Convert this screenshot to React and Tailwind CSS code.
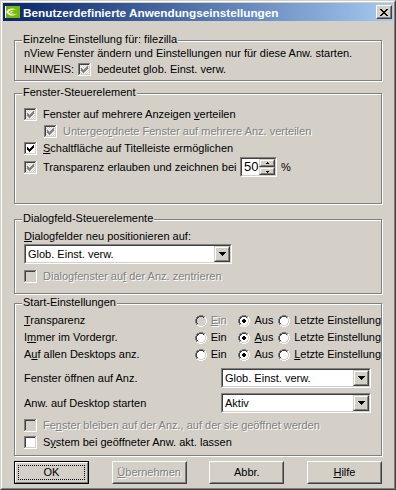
import { useId } from "react";

const OUTER = [[4,5,6,7],[2,3,8,9],[1,10],[1,10],[0,11],[0,11],[0,11],[0,11],[1,10],[1,10],[2,3,8,9],[4,5,6,7]];
const INNER = [[],[4,5,6,7],[2,3,8,9],[2,9],[1,10],[1,10],[1,10],[1,10],[2,9],[2,3,8,9],[4,5,6,7],[]];
const FILL = [null,null,[4,4],[3,6],[2,8],[2,8],[2,8],[2,8],[3,6],[4,4],null,null];
const CHECK = [[3,5],[4,6],[5,7],[6,6],[7,5],[8,4],[9,3]];

function RadioIcon({ checked, disabled }) {
  const px = [];
  OUTER.forEach((row, y) =>
    row.forEach((x) =>
      px.push(<rect key={"o" + x + "-" + y} x={x} y={y} width="1" height="1" fill={x + y <= 10 ? "#808080" : "#ffffff"} />)
    )
  );
  INNER.forEach((row, y) =>
    row.forEach((x) =>
      px.push(<rect key={"i" + x + "-" + y} x={x} y={y} width="1" height="1" fill={x + y <= 10 ? "#404040" : "#d4d0c8"} />)
    )
  );
  FILL.forEach((f, y) => {
    if (f) px.push(<rect key={"f" + y} x={f[0]} y={y} width={f[1]} height="1" fill={disabled ? "#d4d0c8" : "#ffffff"} />);
  });
  return (
    <svg width="12" height="12" viewBox="0 0 12 12" shapeRendering="crispEdges" className="shrink-0">
      {px}
      {checked && (
        <g fill="#000">
          <rect x="5" y="4" width="2" height="1" />
          <rect x="4" y="5" width="4" height="2" />
          <rect x="5" y="7" width="2" height="1" />
        </g>
      )}
    </svg>
  );
}

function CheckIcon({ state }) {
  const id = useId();
  const gray = state === "gray";
  const fill = gray ? `url(#${id})` : state === "disabled" ? "#d4d0c8" : "#ffffff";
  return (
    <svg width="13" height="13" viewBox="0 0 13 13" shapeRendering="crispEdges" className="shrink-0">
      <defs>
        <pattern id={id} width="2" height="2" patternUnits="userSpaceOnUse">
          <rect width="2" height="2" fill="#d4d0c8" />
          <rect width="1" height="1" fill="#ffffff" />
          <rect x="1" y="1" width="1" height="1" fill="#ffffff" />
        </pattern>
      </defs>
      <rect x="0" y="0" width="12" height="1" fill="#808080" />
      <rect x="0" y="0" width="1" height="12" fill="#808080" />
      <rect x="1" y="1" width="10" height="1" fill="#404040" />
      <rect x="1" y="1" width="1" height="10" fill="#404040" />
      <rect x="0" y="12" width="13" height="1" fill="#ffffff" />
      <rect x="12" y="0" width="1" height="13" fill="#ffffff" />
      <rect x="1" y="11" width="11" height="1" fill="#d4d0c8" />
      <rect x="11" y="1" width="1" height="11" fill="#d4d0c8" />
      <rect x="2" y="2" width="9" height="9" fill={fill} />
      {(state === "checked" || gray) &&
        CHECK.map(([x, y]) => (
          <rect key={x} x={x} y={y} width="1" height="3" fill={gray ? "#808080" : "#000000"} />
        ))}
    </svg>
  );
}

function Dis({ children, className = "" }) {
  return <span className={"text-[#808080] [text-shadow:1px_1px_0_#ffffff] " + className}>{children}</span>;
}

function Sunken({ className = "", children }) {
  return (
    <div className={"border border-t-[#808080] border-l-[#808080] border-r-white border-b-white " + className}>
      <div className="h-full border border-t-[#404040] border-l-[#404040] border-r-[#d4d0c8] border-b-[#d4d0c8] bg-white flex items-center">
        {children}
      </div>
    </div>
  );
}

function SmallRaised({ className = "", children }) {
  return (
    <div className={"border border-t-[#d4d0c8] border-l-[#d4d0c8] border-r-[#404040] border-b-[#404040] bg-[#d4d0c8] " + className}>
      <div className="h-full border border-t-white border-l-white border-r-[#808080] border-b-[#808080] flex items-center justify-center">
        {children}
      </div>
    </div>
  );
}

function DownArrow() {
  return (
    <svg width="7" height="4" viewBox="0 0 7 4" shapeRendering="crispEdges">
      <rect x="0" y="0" width="7" height="1" fill="#000" />
      <rect x="1" y="1" width="5" height="1" fill="#000" />
      <rect x="2" y="2" width="3" height="1" fill="#000" />
      <rect x="3" y="3" width="1" height="1" fill="#000" />
    </svg>
  );
}

function Combo({ value, className = "" }) {
  return (
    <Sunken className={"h-[20px] " + className}>
      <span className="flex-1 pl-[2px] leading-[13px] truncate">{value}</span>
      <SmallRaised className="w-[16px] h-full shrink-0">
        <DownArrow />
      </SmallRaised>
    </Sunken>
  );
}

function Group({ label, className = "", children }) {
  return (
    <div className={"relative border border-[#808080] shadow-[inset_1px_1px_0_#ffffff,1px_1px_0_#ffffff] " + className}>
      <span className="absolute -top-[8px] left-[7px] px-px bg-[#d4d0c8] leading-[13px]">{label}</span>
      {children}
    </div>
  );
}

function RadioItem({ checked, disabled, children, className = "" }) {
  return (
    <div className={"flex items-center " + className}>
      <RadioIcon checked={checked} disabled={disabled} />
      <span className="ml-[4px] whitespace-nowrap">{disabled ? <Dis>{children}</Dis> : children}</span>
    </div>
  );
}

function RadioRow({ label, first, second, third }) {
  return (
    <div className="flex items-center h-[17px]">
      <span className="w-[172px] whitespace-nowrap">{label}</span>
      <RadioItem disabled={first === "dis"} className="w-[44px]">{first === "dis" ? <><u>E</u>in</> : first || "Ein"}</RadioItem>
      <RadioItem checked className="w-[40px]">{second || "Aus"}</RadioItem>
      <RadioItem>{third || "Letzte Einstellung"}</RadioItem>
    </div>
  );
}

function PushButton({ children, isDefault }) {
  if (isDefault) {
    return (
      <div className="w-[75px] h-[23px] border border-black">
        <div className="h-full border border-t-white border-l-white border-r-[#808080] border-b-[#808080] p-[2px]">
          <div className="h-full border border-dotted border-black flex items-center justify-center">{children}</div>
        </div>
      </div>
    );
  }
  return (
    <div className="w-[75px] h-[23px] border border-t-white border-l-white border-r-[#404040] border-b-[#404040]">
      <div className="h-full border border-t-[#d4d0c8] border-l-[#d4d0c8] border-r-[#808080] border-b-[#808080] flex items-center justify-center">
        {children}
      </div>
    </div>
  );
}

function NvIcon() {
  return (
    <svg width="16" height="14" viewBox="0 0 16 14">
      <rect x="1" y="1" width="14" height="12" fill="#76b900" />
      <path d="M1 7 C4 2.5 10 2.5 13 6 C10 3.8 6 4 3.5 7 C6 10 9.5 10.2 12 8.5 C9.5 11.5 4 11.5 1 7Z" fill="#ffffff" />
      <path d="M5 7 C6.5 5.3 8.5 5.3 10 6.5 C8.5 6 7 6.4 6.3 7.4 C7.3 8.4 8.6 8.5 9.8 8 C8.3 9.4 6.2 9 5 7Z" fill="#ffffff" />
      <rect x="0" y="1" width="1" height="12" fill="#ffffff" />
    </svg>
  );
}

function CloseX() {
  const rows = [[0, 1, 6, 7], [1, 2, 5, 6], [2, 3, 4, 5], [3, 4], [2, 3, 4, 5], [1, 2, 5, 6], [0, 1, 6, 7]];
  return (
    <svg width="8" height="7" viewBox="0 0 8 7" shapeRendering="crispEdges">
      {rows.map((r, y) => r.map((x) => <rect key={x + "-" + y} x={x} y={y} width="1" height="1" fill="#000" />))}
    </svg>
  );
}

export default function App() {
  return (
    <div className="w-[396px] h-[490px] bg-[#d4d0c8] text-black text-[11px] leading-[13px] font-['Liberation_Sans',Arial,sans-serif] border border-t-[#d4d0c8] border-l-[#d4d0c8] border-r-[#404040] border-b-[#404040]">
      <div className="h-full border border-t-white border-l-white border-r-[#808080] border-b-[#808080] p-px flex flex-col">
        <div className="h-[18px] shrink-0 flex items-center pl-[2px] pr-[1px] bg-linear-to-r from-[#0a246a] to-[#a6caf0]">
          <NvIcon />
          <span className="ml-[2px] font-bold text-[11.75px] text-white whitespace-nowrap">Benutzerdefinierte Anwendungseinstellungen</span>
          <div className="ml-auto w-[16px] h-[14px] border border-t-white border-l-white border-r-[#404040] border-b-[#404040] bg-[#d4d0c8]">
            <div className="h-full border border-t-[#d4d0c8] border-l-[#d4d0c8] border-r-[#808080] border-b-[#808080] flex items-center justify-center">
              <CloseX />
            </div>
          </div>
        </div>

        <div className="flex flex-col px-[11px] pt-[19px]">
          <Group label="Einzelne Einstellung für: filezilla" className="h-[41px]">
            <div className="flex flex-col pt-[6px] pl-[9px]">
              <div className="h-[13px] whitespace-nowrap">nView Fenster ändern und Einstellungen nur für diese Anw. starten.</div>
              <div className="mt-[2px] h-[15px] flex items-center">
                <span>HINWEIS:</span>
                <span className="ml-[4px] flex"><CheckIcon state="gray" /></span>
                <span className="ml-[6px]">bedeutet glob. Einst. verw.</span>
              </div>
            </div>
          </Group>

          <Group label="Fenster-Steuerelement" className="h-[111px] mt-[12px]">
            <div className="flex flex-col pt-[12px] pl-[9px]">
              <div className="h-[17px] flex items-center">
                <CheckIcon state="gray" />
                <span className="ml-[6px]">Fenster auf mehrere Anzeigen <u>v</u>erteilen</span>
              </div>
              <div className="h-[17px] flex items-center pl-[20px]">
                <CheckIcon state="gray" />
                <Dis className="ml-[6px]">Untergeo<u>r</u>dnete Fenster auf mehrere Anz. verteilen</Dis>
              </div>
              <div className="h-[17px] flex items-center">
                <CheckIcon state="checked" />
                <span className="ml-[6px]"><u>S</u>chaltfläche auf Titelleiste ermöglichen</span>
              </div>
              <div className="h-[20px] flex items-center">
                <CheckIcon state="gray" />
                <span className="ml-[6px] w-[197px] whitespace-nowrap">Transparenz erlauben und zeichnen bei</span>
                <Sunken className="w-[37px] h-[20px]">
                  <span className="flex-1 pl-[2px] text-[13px] leading-[14px]">50</span>
                  <div className="w-[16px] h-full flex flex-col shrink-0">
                    <SmallRaised className="h-[8px]">
                      <svg width="5" height="3" viewBox="0 0 5 3" shapeRendering="crispEdges">
                        <rect x="2" y="0" width="1" height="1" fill="#000" />
                        <rect x="1" y="1" width="3" height="1" fill="#000" />
                      </svg>
                    </SmallRaised>
                    <SmallRaised className="h-[8px]">
                      <svg width="5" height="3" viewBox="0 0 5 3" shapeRendering="crispEdges">
                        <rect x="1" y="1" width="3" height="1" fill="#000" />
                        <rect x="2" y="2" width="1" height="1" fill="#000" />
                      </svg>
                    </SmallRaised>
                  </div>
                </Sunken>
                <span className="ml-[4px]">%</span>
              </div>
            </div>
          </Group>

          <Group label="Dialogfeld-Steuerelemente" className="h-[75px] mt-[15px]">
            <div className="flex flex-col pt-[10px] pl-[9px]">
              <div className="h-[13px]"><u>D</u>ialogfelder neu positionieren auf:</div>
              <Combo value="Glob. Einst. verw." className="w-[208px] mt-[1px]" />
              <div className="h-[16px] mt-[4px] flex items-center">
                <CheckIcon state="disabled" />
                <Dis className="ml-[6px]">Dialogfenster au<u>f</u> der Anz. zentrieren</Dis>
              </div>
            </div>
          </Group>

          <Group label="Start-Einstellungen" className="h-[153px] mt-[9px]">
            <div className="flex flex-col pt-[8px] pl-[9px]">
              <RadioRow label={<><u>T</u>ransparenz</>} first="dis" />
              <RadioRow label={<>I<u>m</u>mer im Vordergr.</>} second={<><u>A</u>us</>} />
              <RadioRow label={<>A<u>u</u>f allen Desktops anz.</>} third={<><u>L</u>etzte Einstellung</>} />
              <div className="mt-[5px] flex items-center">
                <span className="w-[197px]">Fenster öffnen auf Anz.</span>
                <Combo value="Glob. Einst. verw." className="w-[150px]" />
              </div>
              <div className="mt-[5px] flex items-center">
                <span className="w-[197px]">Anw. auf Desktop starten</span>
                <Combo value="Aktiv" className="w-[150px]" />
              </div>
              <div className="h-[17px] mt-[4px] flex items-center">
                <CheckIcon state="disabled" />
                <Dis className="ml-[6px] whitespace-nowrap">Fe<u>n</u>ster bleiben auf der Anz., auf der sie geöffnet werden</Dis>
              </div>
              <div className="h-[17px] flex items-center">
                <CheckIcon state="empty" />
                <span className="ml-[6px]">S<u>y</u>stem bei geöffneter Anw. akt. lassen</span>
              </div>
            </div>
          </Group>

          <div className="mt-[5px] flex justify-between">
            <PushButton isDefault>OK</PushButton>
            <PushButton><Dis><u>Ü</u>bernehmen</Dis></PushButton>
            <PushButton>Abbr.</PushButton>
            <PushButton><u>H</u>ilfe</PushButton>
          </div>
        </div>
      </div>
    </div>
  );
}
